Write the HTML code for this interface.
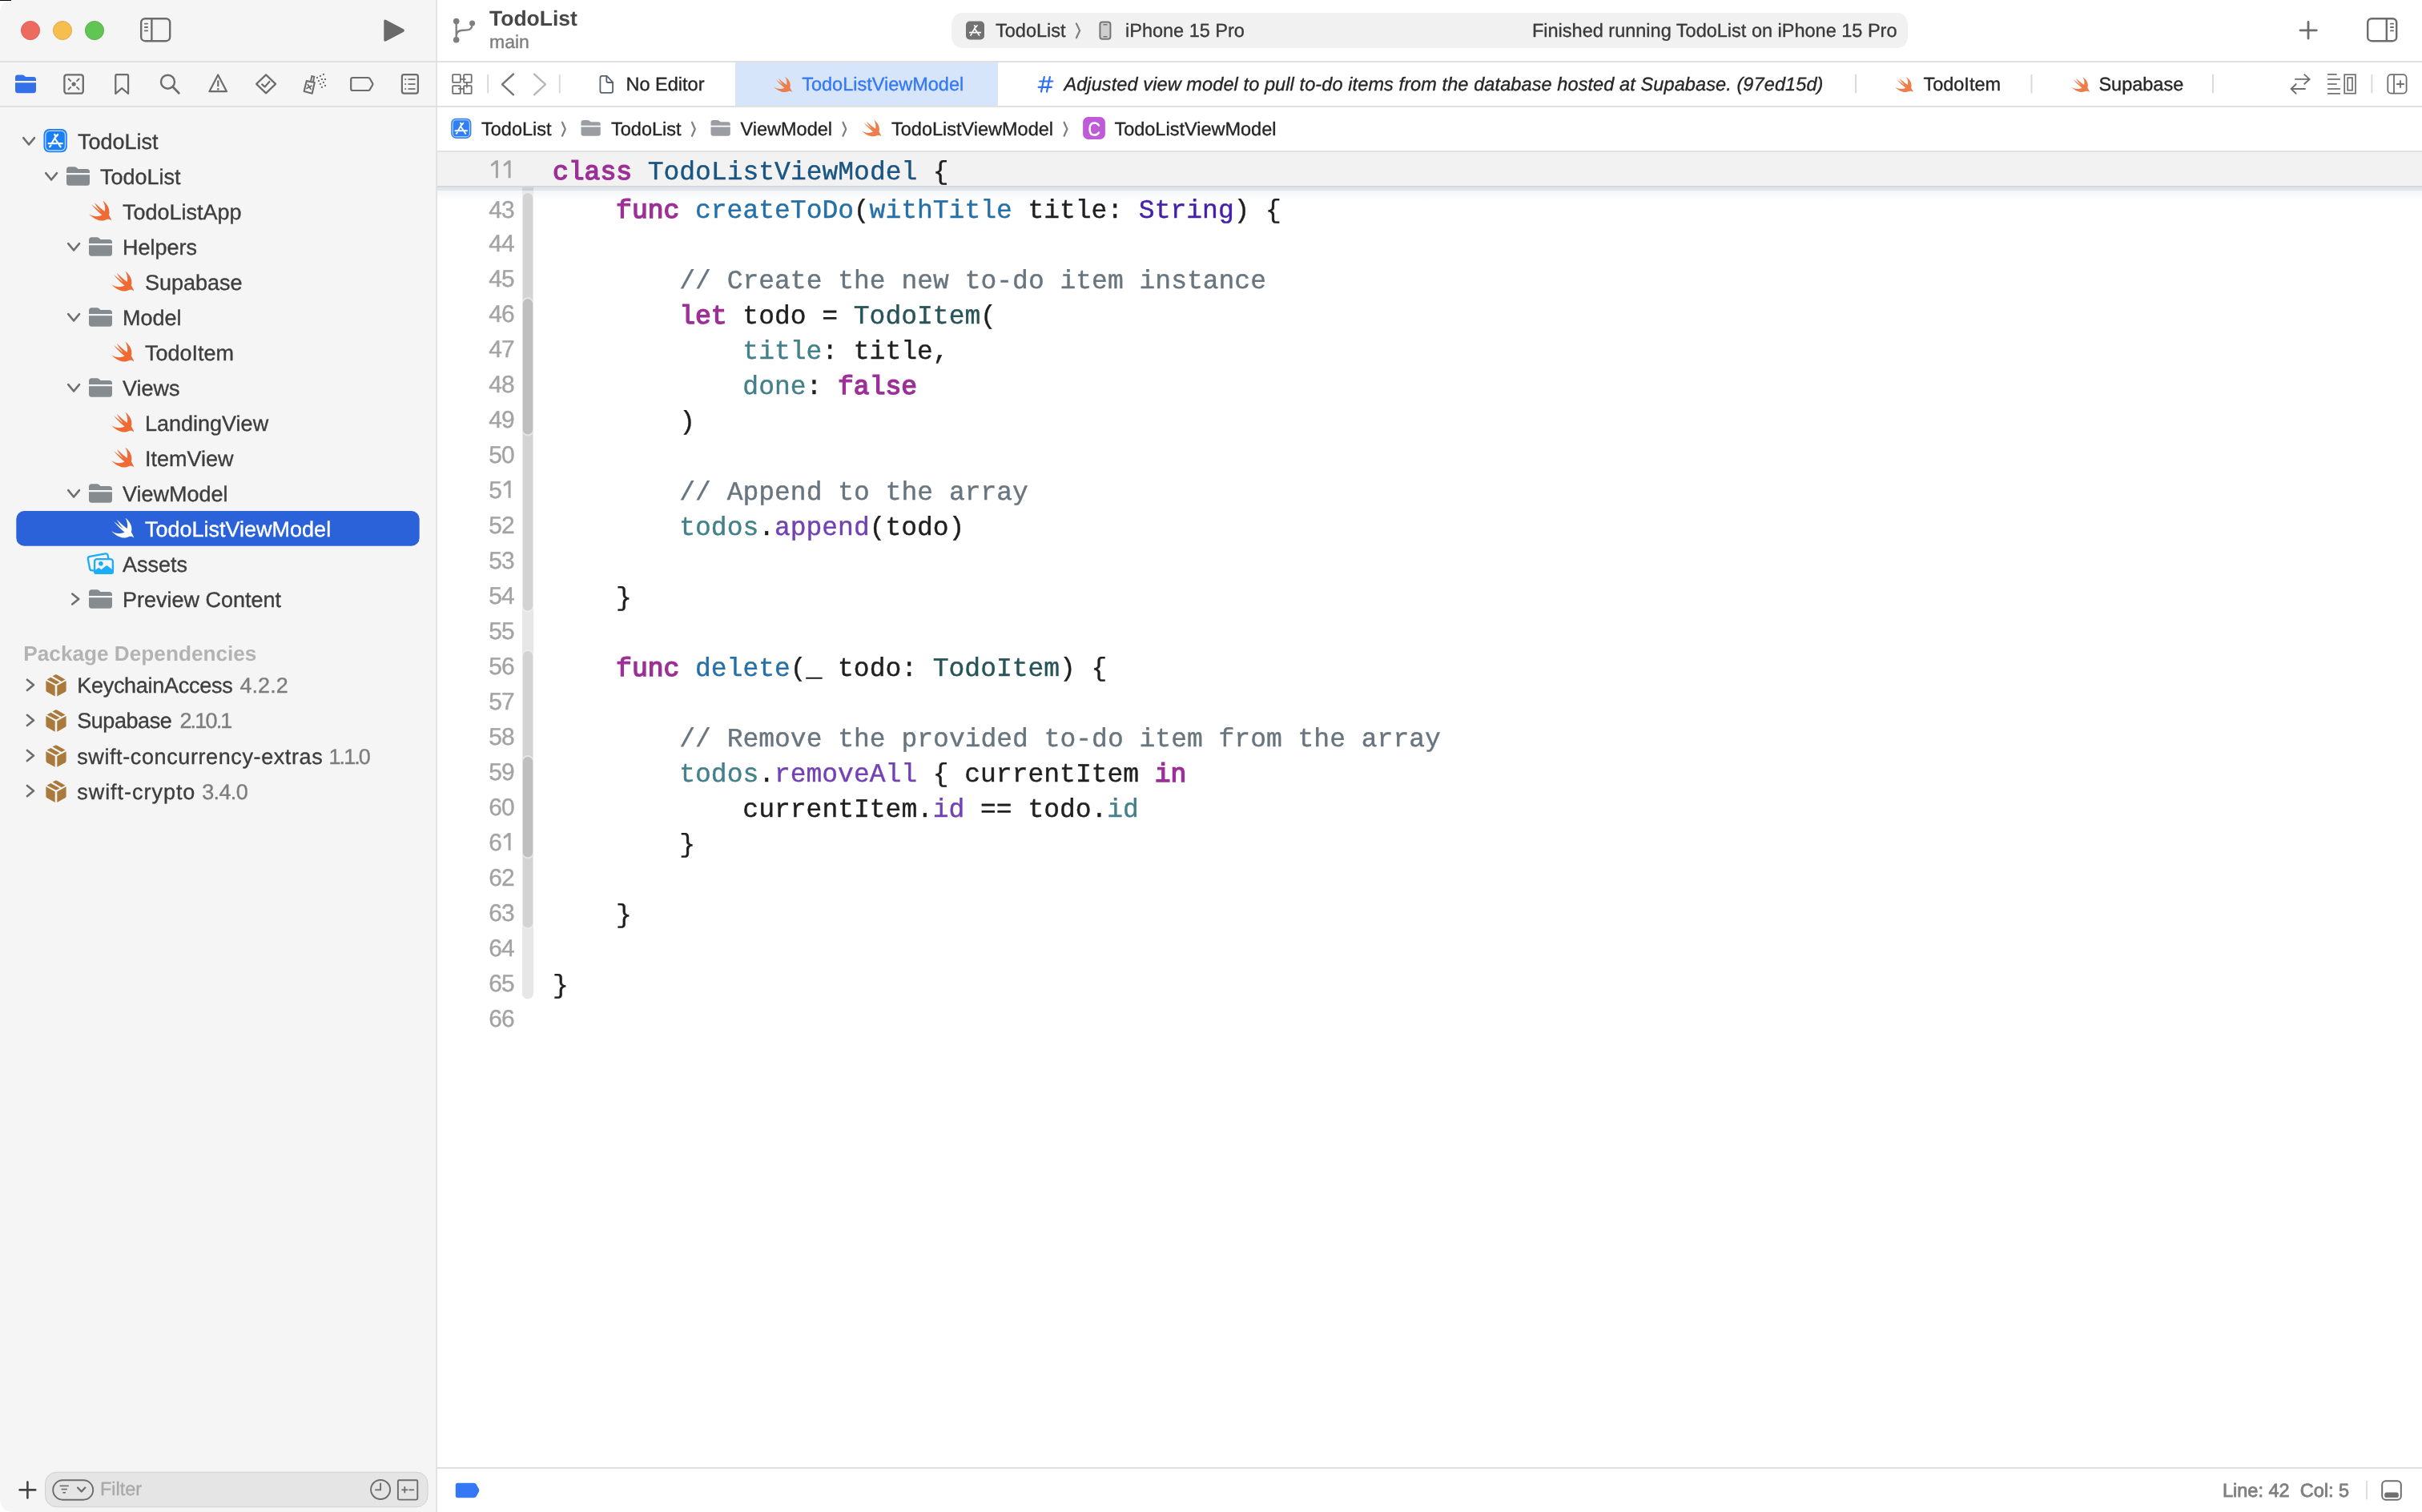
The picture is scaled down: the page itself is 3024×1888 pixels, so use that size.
<!DOCTYPE html><html><head><meta charset="utf-8"><style>html,body{margin:0;padding:0;background:#ffffff;overflow:hidden}svg{display:block;will-change:transform}text{white-space:pre}</style></head><body>
<svg width="3024" height="1888" viewBox="0 0 3024 1888" text-rendering="geometricPrecision">
<rect x="0" y="0" width="3024" height="1888" rx="0" fill="#ffffff" />
<path d="M16 0 L545 0 L545 1888 L17 1888 Q0 1888 0 1871 L0 16 Q0 0 16 0 Z" fill="#f5f5f5"/>
<rect x="0" y="0" width="14" height="1" rx="0" fill="#000000" />
<rect x="544" y="0" width="2" height="1888" rx="0" fill="#e3e3e3" />
<rect x="0" y="76" width="3024" height="2" rx="0" fill="#e0e0e0" />
<rect x="0" y="132" width="3024" height="2" rx="0" fill="#e0e0e0" />
<circle cx="38" cy="38" r="11.6" fill="#ed6a5e" stroke="#d8544a" stroke-width="0.8"/>
<circle cx="78" cy="38" r="11.6" fill="#f5bf4f" stroke="#dba23d" stroke-width="0.8"/>
<circle cx="118" cy="38" r="11.6" fill="#61c554" stroke="#4fa93f" stroke-width="0.8"/>
<rect x="176.2" y="23.2" width="36" height="28" rx="5" fill="none" stroke="#6c6c6c" stroke-width="2.4"/>
<rect x="188.2" y="23.2" width="2.4" height="28" rx="0" fill="#6c6c6c" />
<rect x="180" y="28.700000000000003" width="5" height="1.8" rx="0.9" fill="#6c6c6c" />
<rect x="180" y="33.1" width="5" height="1.8" rx="0.9" fill="#6c6c6c" />
<rect x="180" y="37.5" width="5" height="1.8" rx="0.9" fill="#6c6c6c" />
<path d="M482.2 24.9 Q479.3 23.4 479.3 26.6 L479.3 49.6 Q479.3 52.8 482.2 51.3 L503.6 40.1 Q506.2 38.2 503.6 36.3 Z" fill="#6a6a6a"/>
<g fill="#7f7f7f"><circle cx="569.7" cy="26.6" r="3.8"/><circle cx="569.7" cy="49.8" r="3.8"/><circle cx="589.6" cy="29.1" r="3.5"/></g>
<path d="M569.7 27 L569.7 49.5" fill="none" stroke="#7f7f7f" stroke-width="2.3" stroke-linecap="round" stroke-linejoin="round" />
<path d="M570 43 Q571 38.5 576 38 L584 37.4 Q589.3 37 589.6 30" fill="none" stroke="#7f7f7f" stroke-width="2.3" stroke-linecap="round" stroke-linejoin="round" />
<text x="611" y="32" font-family="'Liberation Sans', sans-serif" font-size="26.5" fill="#474747" font-weight="700" font-style="normal" text-anchor="start" >TodoList</text>
<text x="611" y="60" font-family="'Liberation Sans', sans-serif" font-size="23" fill="#7d7d7d" stroke="#7d7d7d" stroke-width="0.35" font-weight="400" font-style="normal" text-anchor="start" >main</text>
<rect x="1188" y="16" width="1194" height="44" rx="14" fill="#f1f1f1" />
<g transform="translate(1206,26.5) scale(0.7931)"><rect x="0" y="0" width="29" height="29" rx="6" fill="#727272"/><g stroke="#fff" stroke-width="2.1" stroke-linecap="round" stroke-linejoin="round" fill="none"><path d="M15.6 8.2 L9.9 17.9"/><path d="M13.4 6.9 L15.5 9.4 L17.6 6.9"/><path d="M13.9 11.9 L20.9 22.1"/><path d="M6.0 17.9 L16.0 17.9"/><path d="M18.8 17.9 L23.0 17.9"/><path d="M7.5 22.1 L8.9 20.3"/></g></g>
<text x="1243" y="45.5" font-family="'Liberation Sans', sans-serif" font-size="23.5" fill="#3a3a3a" stroke="#3a3a3a" stroke-width="0.35" font-weight="400" font-style="normal" text-anchor="start" >TodoList</text>
<path d="M1343.9 29.4 L1348.1 38.3 L1343.9 47.2" fill="none" stroke="#7f7f7f" stroke-width="2.2" stroke-linecap="round" stroke-linejoin="round" />
<rect x="1373.4" y="27.5" width="13" height="21.2" rx="3" fill="#cfcfcf" stroke="#747474" stroke-width="2"/>
<rect x="1377.5" y="30" width="5" height="1.5" rx="0" fill="#747474" />
<rect x="1377.5" y="45" width="5" height="1.5" rx="0" fill="#747474" />
<text x="1405" y="45.5" font-family="'Liberation Sans', sans-serif" font-size="23.5" fill="#3a3a3a" stroke="#3a3a3a" stroke-width="0.35" font-weight="400" font-style="normal" text-anchor="start" >iPhone 15 Pro</text>
<text x="2368.5" y="46" font-family="'Liberation Sans', sans-serif" font-size="23.5" fill="#3a3a3a" stroke="#3a3a3a" stroke-width="0.35" font-weight="400" font-style="normal" text-anchor="end" >Finished running TodoList on iPhone 15 Pro</text>
<path d="M2882 27.5 L2882 48" fill="none" stroke="#6e6e6e" stroke-width="2.8" stroke-linecap="round" stroke-linejoin="round" />
<path d="M2872 37.8 L2892.3 37.8" fill="none" stroke="#6e6e6e" stroke-width="2.8" stroke-linecap="round" stroke-linejoin="round" />
<rect x="2956.2" y="23.2" width="36" height="28" rx="5" fill="none" stroke="#6c6c6c" stroke-width="2.4"/>
<rect x="2978.6" y="23.2" width="2.4" height="28" rx="0" fill="#6c6c6c" />
<rect x="2984" y="28.8" width="5" height="1.8" rx="0.9" fill="#6c6c6c" />
<rect x="2984" y="33.1" width="5" height="1.8" rx="0.9" fill="#6c6c6c" />
<rect x="2984" y="37.5" width="5" height="1.8" rx="0.9" fill="#6c6c6c" />
<g transform="translate(19,93.6) scale(0.8966,0.9617)"><path fill="#3470e8" d="M0 3.5 Q0 0 3.5 0 L9.5 0 Q11.5 0 13 1.3 L14.5 2.6 L25.5 2.6 Q29 2.6 29 6.2 L29 7.8 L0 7.8 Z"/><path fill="#3470e8" d="M0 10 L29 10 L29 20 Q29 23.5 25.5 23.5 L3.5 23.5 Q0 23.5 0 20 Z"/></g>
<rect x="80.4" y="93.3" width="23.4" height="23.4" rx="3" fill="none" stroke="#6c6c6c" stroke-width="2.3"/>
<circle cx="92.1" cy="105" r="2.6" fill="#6c6c6c"/>
<path d="M85.6 98.5 L88.2 101.1" fill="none" stroke="#6c6c6c" stroke-width="1.8" stroke-linecap="round" stroke-linejoin="round" />
<path d="M98.6 98.5 L96.0 101.1" fill="none" stroke="#6c6c6c" stroke-width="1.8" stroke-linecap="round" stroke-linejoin="round" />
<path d="M85.6 111.5 L88.2 108.9" fill="none" stroke="#6c6c6c" stroke-width="1.8" stroke-linecap="round" stroke-linejoin="round" />
<path d="M98.6 111.5 L96.0 108.9" fill="none" stroke="#6c6c6c" stroke-width="1.8" stroke-linecap="round" stroke-linejoin="round" />
<path d="M144.3 94.5 Q144.3 93.2 145.6 93.2 L158.8 93.2 Q160.1 93.2 160.1 94.5 L160.1 117 L152.2 110.2 L144.3 117 Z" fill="none" stroke="#6c6c6c" stroke-width="2.2" stroke-linecap="round" stroke-linejoin="round" />
<circle cx="209.5" cy="102.2" r="8.5" fill="none" stroke="#6c6c6c" stroke-width="2.4"/>
<path d="M215.8 108.6 L223.3 116.2" fill="none" stroke="#6c6c6c" stroke-width="2.8" stroke-linecap="round" stroke-linejoin="round" />
<path d="M272.2 93.5 L283 114.2 L261.4 114.2 Z" fill="none" stroke="#6c6c6c" stroke-width="2.2" stroke-linecap="round" stroke-linejoin="round" />
<rect x="271.2" y="100.2" width="2.2" height="8" rx="1" fill="#6c6c6c" />
<circle cx="272.3" cy="111.2" r="1.3" fill="#6c6c6c"/>
<path d="M332.1 93.4 L344.1 104.9 L332.1 116.4 L320.1 104.9 Z" fill="none" stroke="#6c6c6c" stroke-width="2.2" stroke-linecap="round" stroke-linejoin="round" />
<path d="M327.2 105.4 L330.6 108.4 L336.4 102" fill="none" stroke="#6c6c6c" stroke-width="2.2" stroke-linecap="round" stroke-linejoin="round" />
<path d="M382.8 101.1 L392.8 103.0 L389.7 116.8 L379.6 113.9 Z" fill="none" stroke="#6c6c6c" stroke-width="2.1" stroke-linecap="round" stroke-linejoin="round" />
<path d="M388.0 101.6 L389.3 95.2 L392.3 95.8 L391.0 102.2" fill="none" stroke="#6c6c6c" stroke-width="1.9" stroke-linecap="butt" stroke-linejoin="miter" />
<path d="M384.3 105.6 L388.0 111.3 M388.9 107.2 L383.0 110.3" fill="none" stroke="#6c6c6c" stroke-width="1.8" stroke-linecap="round" stroke-linejoin="round" />
<rect x="395" y="95.9" width="2" height="2" rx="0" fill="#6c6c6c" />
<rect x="398.9" y="93.9" width="2" height="2" rx="0" fill="#6c6c6c" />
<rect x="402.9" y="91.9" width="2" height="2" rx="0" fill="#6c6c6c" />
<rect x="400.9" y="98" width="2" height="2" rx="0" fill="#6c6c6c" />
<rect x="405" y="98" width="2" height="2" rx="0" fill="#6c6c6c" />
<rect x="396.9" y="100" width="2" height="2" rx="0" fill="#6c6c6c" />
<rect x="402.9" y="101.9" width="2" height="2" rx="0" fill="#6c6c6c" />
<rect x="398.9" y="103.9" width="2" height="2" rx="0" fill="#6c6c6c" />
<rect x="405" y="105.9" width="2" height="2" rx="0" fill="#6c6c6c" />
<rect x="400.9" y="107.9" width="2" height="2" rx="0" fill="#6c6c6c" />
<path d="M440.5 97 L459.6 97 Q461 97 461.8 98.2 L465.2 104 Q465.6 105 465.2 106 L461.8 111.8 Q461 113 459.6 113 L440.5 113 Q438.2 113 438.2 110.7 L438.2 99.3 Q438.2 97 440.5 97 Z" fill="none" stroke="#6c6c6c" stroke-width="2.2" stroke-linecap="round" stroke-linejoin="round" />
<rect x="501.9" y="93.2" width="20" height="23.4" rx="2.5" fill="none" stroke="#6c6c6c" stroke-width="2.2"/>
<rect x="505.3" y="98.2" width="1.8" height="1.7" rx="0" fill="#6c6c6c" />
<rect x="509.5" y="98.2" width="9" height="1.7" rx="0" fill="#6c6c6c" />
<rect x="505.3" y="104.2" width="1.8" height="1.7" rx="0" fill="#6c6c6c" />
<rect x="509.5" y="104.2" width="9" height="1.7" rx="0" fill="#6c6c6c" />
<rect x="505.3" y="110.2" width="1.8" height="1.7" rx="0" fill="#6c6c6c" />
<rect x="509.5" y="110.2" width="9" height="1.7" rx="0" fill="#6c6c6c" />
<g fill="none" stroke="#717171" stroke-width="1.8" stroke-linejoin="round"><rect x="565.2" y="93.2" width="9.6" height="9.6" rx="0.6"/><rect x="579.1" y="93.2" width="9.6" height="9.6" rx="0.6"/><rect x="565.2" y="107.2" width="9.6" height="9.6" rx="0.6"/><rect x="579.1" y="107.2" width="9.6" height="9.6" rx="0.6"/><path d="M575 98.9 L581.6 98.9 M582.9 103 L582.9 109.6 M572.2 110.9 L578.9 110.9"/></g>
<rect x="608.2" y="93" width="2" height="23.400000000000006" rx="0" fill="#dadada" />
<path d="M641 92.5 L627 105.4 L641 118.3" fill="none" stroke="#767676" stroke-width="2.4" stroke-linecap="round" stroke-linejoin="round" />
<path d="M667 92.5 L681 105.4 L667 118.3" fill="none" stroke="#b8b8b8" stroke-width="2.4" stroke-linecap="round" stroke-linejoin="round" />
<rect x="697.8" y="93" width="2" height="23.400000000000006" rx="0" fill="#dadada" />
<path d="M751.9 94.9 L757.6 94.9 L765.1 102.6 L765.1 113.4 Q765.1 115.9 762.6 115.9 L751.9 115.9 Q749.4 115.9 749.4 113.4 L749.4 97.4 Q749.4 94.9 751.9 94.9 Z" fill="none" stroke="#56636f" stroke-width="1.8" stroke-linecap="round" stroke-linejoin="round" />
<path d="M757.3 95.3 L757.3 101 Q757.3 103 759.3 103 L765 103" fill="none" stroke="#56636f" stroke-width="1.8" stroke-linecap="round" stroke-linejoin="round" />
<text x="781.5" y="113" font-family="'Liberation Sans', sans-serif" font-size="23.5" fill="#262626" stroke="#262626" stroke-width="0.35" font-weight="400" font-style="normal" text-anchor="start" >No Editor</text>
<rect x="918" y="78" width="328" height="54" rx="0" fill="#d6e5f9" />
<g transform="translate(965.6,95.5) scale(0.8429,0.8040)"><path fill="#ee7d4c" d="M17.3 0.4 C22.8 4.2 26.6 10.8 24.6 17.6 C25.8 19.6 27.1 21.9 27.9 24.4 C26.3 23.0 24.3 22.4 22.1 22.9 C17.6 25.2 10.6 25.9 0.4 16.3 C5.8 19.6 11.6 20.0 16.4 17.6 C11.4 13.4 6.4 8.4 3.4 4.4 C8.0 8.0 12.2 11.4 14.9 13.4 C11.9 10.2 9.2 6.6 7.0 2.6 C11.0 6.2 15.4 10.2 19.6 13.1 C20.6 9.0 19.8 4.2 17.3 0.4 Z"/></g>
<text x="1001.2" y="113.1" font-family="'Liberation Sans', sans-serif" font-size="23.5" fill="#3478f6" stroke="#3478f6" stroke-width="0.35" font-weight="400" font-style="normal" text-anchor="start" >TodoListViewModel</text>
<path d="M1303.9 96 L1300 114.6 M1310.9 96 L1307 114.6 M1298.2 101.5 L1314.3 101.5 M1296.6 108.8 L1312.9 108.8" fill="none" stroke="#2e72f2" stroke-width="2.2" stroke-linecap="round" stroke-linejoin="round" />
<text x="1328.4" y="113.1" font-family="'Liberation Sans', sans-serif" font-size="23.5" fill="#262626" stroke="#262626" stroke-width="0.35" font-weight="400" font-style="italic" text-anchor="start" textLength="948" lengthAdjust="spacing">Adjusted view model to pull to-do items from the database hosted at Supabase. (97ed15d)</text>
<rect x="2316.0" y="93" width="2" height="23.400000000000006" rx="0" fill="#dadada" />
<g transform="translate(2365.4,95.8) scale(0.8429,0.7880)"><path fill="#ee7d4c" d="M17.3 0.4 C22.8 4.2 26.6 10.8 24.6 17.6 C25.8 19.6 27.1 21.9 27.9 24.4 C26.3 23.0 24.3 22.4 22.1 22.9 C17.6 25.2 10.6 25.9 0.4 16.3 C5.8 19.6 11.6 20.0 16.4 17.6 C11.4 13.4 6.4 8.4 3.4 4.4 C8.0 8.0 12.2 11.4 14.9 13.4 C11.9 10.2 9.2 6.6 7.0 2.6 C11.0 6.2 15.4 10.2 19.6 13.1 C20.6 9.0 19.8 4.2 17.3 0.4 Z"/></g>
<text x="2401.4" y="113.3" font-family="'Liberation Sans', sans-serif" font-size="23.5" fill="#262626" stroke="#262626" stroke-width="0.35" font-weight="400" font-style="normal" text-anchor="start" >TodoItem</text>
<rect x="2535.5" y="93" width="2" height="23.400000000000006" rx="0" fill="#dadada" />
<g transform="translate(2585.7,95.8) scale(0.8429,0.7880)"><path fill="#ee7d4c" d="M17.3 0.4 C22.8 4.2 26.6 10.8 24.6 17.6 C25.8 19.6 27.1 21.9 27.9 24.4 C26.3 23.0 24.3 22.4 22.1 22.9 C17.6 25.2 10.6 25.9 0.4 16.3 C5.8 19.6 11.6 20.0 16.4 17.6 C11.4 13.4 6.4 8.4 3.4 4.4 C8.0 8.0 12.2 11.4 14.9 13.4 C11.9 10.2 9.2 6.6 7.0 2.6 C11.0 6.2 15.4 10.2 19.6 13.1 C20.6 9.0 19.8 4.2 17.3 0.4 Z"/></g>
<text x="2620.4" y="113.3" font-family="'Liberation Sans', sans-serif" font-size="23.5" fill="#262626" stroke="#262626" stroke-width="0.35" font-weight="400" font-style="normal" text-anchor="start" >Supabase</text>
<rect x="2762.0" y="93" width="2" height="23.400000000000006" rx="0" fill="#dadada" />
<path d="M2865.2 98.9 L2883.6 98.9 M2876.7 92.6 L2883.6 98.9 L2876.7 105.2" fill="none" stroke="#6e6e6e" stroke-width="1.9" stroke-linecap="butt" stroke-linejoin="miter" />
<path d="M2878.7 111 L2860.6 111 M2867.2 104.5 L2860.6 111 L2867.2 117.4" fill="none" stroke="#6e6e6e" stroke-width="1.9" stroke-linecap="butt" stroke-linejoin="miter" />
<rect x="2906.1" y="92.05000000000001" width="11.599999999999909" height="1.7" rx="0" fill="#6e6e6e" />
<rect x="2906.1" y="98.05000000000001" width="15.800000000000182" height="1.7" rx="0" fill="#6e6e6e" />
<rect x="2906.1" y="104.15" width="11.599999999999909" height="1.7" rx="0" fill="#6e6e6e" />
<rect x="2906.1" y="110.15" width="15.800000000000182" height="1.7" rx="0" fill="#6e6e6e" />
<rect x="2906.1" y="116.05000000000001" width="15.800000000000182" height="1.7" rx="0" fill="#6e6e6e" />
<rect x="2927.2" y="93.2" width="13.8" height="23.5" fill="none" stroke="#6e6e6e" stroke-width="1.7"/>
<rect x="2931.2" y="97.1" width="5.8" height="15.6" fill="none" stroke="#6e6e6e" stroke-width="1.7"/>
<rect x="2960.4" y="93" width="2" height="23.400000000000006" rx="0" fill="#dadada" />
<rect x="2981.3" y="93.2" width="23.3" height="23.5" rx="4.2" fill="none" stroke="#6e6e6e" stroke-width="1.8"/>
<rect x="2988.1" y="93.2" width="1.8" height="23.5" rx="0" fill="#6e6e6e" />
<path d="M2997 100.2 L2997 109.8 M2992.2 105 L3001.8 105" fill="none" stroke="#6e6e6e" stroke-width="1.8" stroke-linecap="butt" stroke-linejoin="round" />
<g transform="translate(563.2,147.7) scale(0.8690)"><rect x="0" y="0" width="29" height="29" rx="7" fill="#2f7ff3"/><rect x="2.3" y="2.3" width="24.4" height="24.4" rx="5.2" fill="none" stroke="#bcd8fb" stroke-width="1.3"/><g stroke="#fff" stroke-width="2.1" stroke-linecap="round" stroke-linejoin="round" fill="none"><path d="M15.6 8.2 L9.9 17.9"/><path d="M13.4 6.9 L15.5 9.4 L17.6 6.9"/><path d="M13.9 11.9 L20.9 22.1"/><path d="M6.0 17.9 L16.0 17.9"/><path d="M18.8 17.9 L23.0 17.9"/><path d="M7.5 22.1 L8.9 20.3"/></g></g>
<text x="601" y="169" font-family="'Liberation Sans', sans-serif" font-size="23.5" fill="#262626" stroke="#262626" stroke-width="0.35" font-weight="400" font-style="normal" text-anchor="start" >TodoList</text>
<path d="M702.0 152.7 L705.8 161.2 L702.0 169.8" fill="none" stroke="#7f7f7f" stroke-width="2.2" stroke-linecap="round" stroke-linejoin="round" />
<g transform="translate(725.5,150.1) scale(0.8379,0.8383)"><path fill="#9a9ea2" d="M0 3.5 Q0 0 3.5 0 L9.5 0 Q11.5 0 13 1.3 L14.5 2.6 L25.5 2.6 Q29 2.6 29 6.2 L29 7.8 L0 7.8 Z"/><path fill="#9a9ea2" d="M0 10 L29 10 L29 20 Q29 23.5 25.5 23.5 L3.5 23.5 Q0 23.5 0 20 Z"/></g>
<text x="763" y="169" font-family="'Liberation Sans', sans-serif" font-size="23.5" fill="#262626" stroke="#262626" stroke-width="0.35" font-weight="400" font-style="normal" text-anchor="start" >TodoList</text>
<path d="M864.0 152.7 L867.8 161.2 L864.0 169.8" fill="none" stroke="#7f7f7f" stroke-width="2.2" stroke-linecap="round" stroke-linejoin="round" />
<g transform="translate(887.5,150.1) scale(0.8379,0.8383)"><path fill="#9a9ea2" d="M0 3.5 Q0 0 3.5 0 L9.5 0 Q11.5 0 13 1.3 L14.5 2.6 L25.5 2.6 Q29 2.6 29 6.2 L29 7.8 L0 7.8 Z"/><path fill="#9a9ea2" d="M0 10 L29 10 L29 20 Q29 23.5 25.5 23.5 L3.5 23.5 Q0 23.5 0 20 Z"/></g>
<text x="924.5" y="169" font-family="'Liberation Sans', sans-serif" font-size="23.5" fill="#262626" stroke="#262626" stroke-width="0.35" font-weight="400" font-style="normal" text-anchor="start" >ViewModel</text>
<path d="M1052.5 152.7 L1056.3 161.2 L1052.5 169.8" fill="none" stroke="#7f7f7f" stroke-width="2.2" stroke-linecap="round" stroke-linejoin="round" />
<g transform="translate(1075.4,149.5) scale(0.9000,0.8560)"><path fill="#ee7d4c" d="M17.3 0.4 C22.8 4.2 26.6 10.8 24.6 17.6 C25.8 19.6 27.1 21.9 27.9 24.4 C26.3 23.0 24.3 22.4 22.1 22.9 C17.6 25.2 10.6 25.9 0.4 16.3 C5.8 19.6 11.6 20.0 16.4 17.6 C11.4 13.4 6.4 8.4 3.4 4.4 C8.0 8.0 12.2 11.4 14.9 13.4 C11.9 10.2 9.2 6.6 7.0 2.6 C11.0 6.2 15.4 10.2 19.6 13.1 C20.6 9.0 19.8 4.2 17.3 0.4 Z"/></g>
<text x="1113" y="169" font-family="'Liberation Sans', sans-serif" font-size="23.5" fill="#262626" stroke="#262626" stroke-width="0.35" font-weight="400" font-style="normal" text-anchor="start" >TodoListViewModel</text>
<path d="M1328.6 152.7 L1332.4 161.2 L1328.6 169.8" fill="none" stroke="#7f7f7f" stroke-width="2.2" stroke-linecap="round" stroke-linejoin="round" />
<rect x="1352.1" y="146" width="27.8" height="27.9" rx="6.5" fill="#bf5bd6" />
<path d="M1371.9 156.6 Q1370.2 153.6 1366.2 153.6 Q1360.6 153.6 1360.6 161.2 Q1360.6 168.6 1366.2 168.6 Q1370.2 168.6 1371.9 165.6" fill="none" stroke="#ffffff" stroke-width="2.5" stroke-linecap="round" stroke-linejoin="round" />
<text x="1391.4" y="169" font-family="'Liberation Sans', sans-serif" font-size="23.5" fill="#262626" stroke="#262626" stroke-width="0.35" font-weight="400" font-style="normal" text-anchor="start" >TodoListViewModel</text>
<rect x="546" y="188" width="2478" height="44" rx="0" fill="#f2f2f2" />
<rect x="546" y="188" width="2478" height="2" rx="0" fill="#e2e2e2" />
<defs><linearGradient id="sh" x1="0" y1="0" x2="0" y2="1"><stop offset="0" stop-color="#f4f5f7"/><stop offset="1" stop-color="#ffffff"/></linearGradient></defs>
<rect x="546" y="238" width="2478" height="12" rx="0" fill="url(#sh)" />
<rect x="546" y="234" width="2478" height="4" rx="0" fill="#dfe6ef" />
<rect x="546" y="232" width="2478" height="2" rx="0" fill="#d7d7d7" />
<defs><clipPath id="rib"><rect x="652" y="234" width="14" height="1020"/></clipPath></defs>
<path d="M652 234 L666 234 L666 1240.5 A7.0 7.0 0 0 1 652 1240.5 Z" fill="#e7e7e7" clip-path="url(#rib)"/>
<path d="M652 247.0 A7.0 7.0 0 0 1 666 247.0 L666 756.5 A7.0 7.0 0 0 1 652 756.5 Z" fill="#d3d3d3" stroke="#ececec" stroke-width="1.8" clip-path="url(#rib)"/>
<path d="M652 819.0 A7.0 7.0 0 0 1 666 819.0 L666 1152.5 A7.0 7.0 0 0 1 652 1152.5 Z" fill="#d3d3d3" stroke="#ececec" stroke-width="1.8" clip-path="url(#rib)"/>
<path d="M652 379.2 A7.0 7.0 0 0 1 666 379.2 L666 536.5 A7.0 7.0 0 0 1 652 536.5 Z" fill="#bfbfbf" stroke="#e6e6e6" stroke-width="1.8" clip-path="url(#rib)"/>
<path d="M652 951.0 A7.0 7.0 0 0 1 666 951.0 L666 1064.5 A7.0 7.0 0 0 1 652 1064.5 Z" fill="#bfbfbf" stroke="#e6e6e6" stroke-width="1.8" clip-path="url(#rib)"/>
<rect x="652" y="234" width="14" height="4" rx="0" fill="#c9cfd8" />
<text x="642.6" y="271.6" font-family="'Liberation Sans', sans-serif" font-size="30" fill="#a3a3a3" stroke="#a3a3a3" stroke-width="0.35" font-weight="400" font-style="normal" text-anchor="end" >3</text>
<text x="626.9" y="271.6" font-family="'Liberation Sans', sans-serif" font-size="30" fill="#a3a3a3" stroke="#a3a3a3" stroke-width="0.35" font-weight="400" font-style="normal" text-anchor="end" >4</text>
<text x="769.12" y="272" font-family="'Liberation Mono', monospace" font-size="33" fill="#9c3096" stroke="#9c3096" stroke-width="1.4" font-weight="400">func</text><text x="868.02" y="272" font-family="'Liberation Mono', monospace" font-size="33" fill="#2670a8" stroke="#2670a8" stroke-width="0.4" font-weight="400">createToDo</text><text x="1065.82" y="272" font-family="'Liberation Mono', monospace" font-size="33" fill="#1f1f1f" stroke="#1f1f1f" stroke-width="0.4" font-weight="400">(</text><text x="1085.60" y="272" font-family="'Liberation Mono', monospace" font-size="33" fill="#2670a8" stroke="#2670a8" stroke-width="0.4" font-weight="400">withTitle</text><text x="1283.40" y="272" font-family="'Liberation Mono', monospace" font-size="33" fill="#1f1f1f" stroke="#1f1f1f" stroke-width="0.4" font-weight="400">title</text><text x="1382.30" y="272" font-family="'Liberation Mono', monospace" font-size="33" fill="#1f1f1f" stroke="#1f1f1f" stroke-width="0.4" font-weight="400">:</text><text x="1421.86" y="272" font-family="'Liberation Mono', monospace" font-size="33" fill="#4420aa" stroke="#4420aa" stroke-width="0.4" font-weight="400">String</text><text x="1540.54" y="272" font-family="'Liberation Mono', monospace" font-size="33" fill="#1f1f1f" stroke="#1f1f1f" stroke-width="0.4" font-weight="400">)</text><text x="1580.10" y="272" font-family="'Liberation Mono', monospace" font-size="33" fill="#1f1f1f" stroke="#1f1f1f" stroke-width="0.4" font-weight="400">{</text>
<text x="642.6" y="313.8" font-family="'Liberation Sans', sans-serif" font-size="30" fill="#a3a3a3" stroke="#a3a3a3" stroke-width="0.35" font-weight="400" font-style="normal" text-anchor="end" >4</text>
<text x="626.9" y="313.8" font-family="'Liberation Sans', sans-serif" font-size="30" fill="#a3a3a3" stroke="#a3a3a3" stroke-width="0.35" font-weight="400" font-style="normal" text-anchor="end" >4</text>

<text x="642.6" y="357.8" font-family="'Liberation Sans', sans-serif" font-size="30" fill="#a3a3a3" stroke="#a3a3a3" stroke-width="0.35" font-weight="400" font-style="normal" text-anchor="end" >5</text>
<text x="626.9" y="357.8" font-family="'Liberation Sans', sans-serif" font-size="30" fill="#a3a3a3" stroke="#a3a3a3" stroke-width="0.35" font-weight="400" font-style="normal" text-anchor="end" >4</text>
<text x="848.24" y="360" font-family="'Liberation Mono', monospace" font-size="33" fill="#68757f" stroke="#68757f" stroke-width="0.4" font-weight="400">// Create the new to-do item instance</text>
<text x="642.6" y="401.8" font-family="'Liberation Sans', sans-serif" font-size="30" fill="#a3a3a3" stroke="#a3a3a3" stroke-width="0.35" font-weight="400" font-style="normal" text-anchor="end" >6</text>
<text x="626.9" y="401.8" font-family="'Liberation Sans', sans-serif" font-size="30" fill="#a3a3a3" stroke="#a3a3a3" stroke-width="0.35" font-weight="400" font-style="normal" text-anchor="end" >4</text>
<text x="848.24" y="404" font-family="'Liberation Mono', monospace" font-size="33" fill="#9c3096" stroke="#9c3096" stroke-width="1.4" font-weight="400">let</text><text x="927.36" y="404" font-family="'Liberation Mono', monospace" font-size="33" fill="#1f1f1f" stroke="#1f1f1f" stroke-width="0.4" font-weight="400">todo</text><text x="1026.26" y="404" font-family="'Liberation Mono', monospace" font-size="33" fill="#1f1f1f" stroke="#1f1f1f" stroke-width="0.4" font-weight="400">=</text><text x="1065.82" y="404" font-family="'Liberation Mono', monospace" font-size="33" fill="#275459" stroke="#275459" stroke-width="0.4" font-weight="400">TodoItem</text><text x="1224.06" y="404" font-family="'Liberation Mono', monospace" font-size="33" fill="#1f1f1f" stroke="#1f1f1f" stroke-width="0.4" font-weight="400">(</text>
<text x="642.6" y="445.8" font-family="'Liberation Sans', sans-serif" font-size="30" fill="#a3a3a3" stroke="#a3a3a3" stroke-width="0.35" font-weight="400" font-style="normal" text-anchor="end" >7</text>
<text x="626.9" y="445.8" font-family="'Liberation Sans', sans-serif" font-size="30" fill="#a3a3a3" stroke="#a3a3a3" stroke-width="0.35" font-weight="400" font-style="normal" text-anchor="end" >4</text>
<text x="927.36" y="448" font-family="'Liberation Mono', monospace" font-size="33" fill="#43808a" stroke="#43808a" stroke-width="0.4" font-weight="400">title</text><text x="1026.26" y="448" font-family="'Liberation Mono', monospace" font-size="33" fill="#1f1f1f" stroke="#1f1f1f" stroke-width="0.4" font-weight="400">:</text><text x="1065.82" y="448" font-family="'Liberation Mono', monospace" font-size="33" fill="#1f1f1f" stroke="#1f1f1f" stroke-width="0.4" font-weight="400">title,</text>
<text x="642.6" y="489.8" font-family="'Liberation Sans', sans-serif" font-size="30" fill="#a3a3a3" stroke="#a3a3a3" stroke-width="0.35" font-weight="400" font-style="normal" text-anchor="end" >8</text>
<text x="626.9" y="489.8" font-family="'Liberation Sans', sans-serif" font-size="30" fill="#a3a3a3" stroke="#a3a3a3" stroke-width="0.35" font-weight="400" font-style="normal" text-anchor="end" >4</text>
<text x="927.36" y="492" font-family="'Liberation Mono', monospace" font-size="33" fill="#43808a" stroke="#43808a" stroke-width="0.4" font-weight="400">done</text><text x="1006.48" y="492" font-family="'Liberation Mono', monospace" font-size="33" fill="#1f1f1f" stroke="#1f1f1f" stroke-width="0.4" font-weight="400">:</text><text x="1046.04" y="492" font-family="'Liberation Mono', monospace" font-size="33" fill="#9c3096" stroke="#9c3096" stroke-width="1.4" font-weight="400">false</text>
<text x="642.6" y="533.8" font-family="'Liberation Sans', sans-serif" font-size="30" fill="#a3a3a3" stroke="#a3a3a3" stroke-width="0.35" font-weight="400" font-style="normal" text-anchor="end" >9</text>
<text x="626.9" y="533.8" font-family="'Liberation Sans', sans-serif" font-size="30" fill="#a3a3a3" stroke="#a3a3a3" stroke-width="0.35" font-weight="400" font-style="normal" text-anchor="end" >4</text>
<text x="848.24" y="536" font-family="'Liberation Mono', monospace" font-size="33" fill="#1f1f1f" stroke="#1f1f1f" stroke-width="0.4" font-weight="400">)</text>
<text x="642.6" y="577.8" font-family="'Liberation Sans', sans-serif" font-size="30" fill="#a3a3a3" stroke="#a3a3a3" stroke-width="0.35" font-weight="400" font-style="normal" text-anchor="end" >0</text>
<text x="626.9" y="577.8" font-family="'Liberation Sans', sans-serif" font-size="30" fill="#a3a3a3" stroke="#a3a3a3" stroke-width="0.35" font-weight="400" font-style="normal" text-anchor="end" >5</text>

<path d="M634.60 599.90 L637.60 599.90 L637.60 621.80 L634.60 621.80 L634.60 603.90 L629.40 607.60 L628.40 605.00 Z" fill="#a3a3a3"/>
<text x="626.9" y="621.8" font-family="'Liberation Sans', sans-serif" font-size="30" fill="#a3a3a3" stroke="#a3a3a3" stroke-width="0.35" font-weight="400" font-style="normal" text-anchor="end" >5</text>
<text x="848.24" y="624" font-family="'Liberation Mono', monospace" font-size="33" fill="#68757f" stroke="#68757f" stroke-width="0.4" font-weight="400">// Append to the array</text>
<text x="642.6" y="665.8" font-family="'Liberation Sans', sans-serif" font-size="30" fill="#a3a3a3" stroke="#a3a3a3" stroke-width="0.35" font-weight="400" font-style="normal" text-anchor="end" >2</text>
<text x="626.9" y="665.8" font-family="'Liberation Sans', sans-serif" font-size="30" fill="#a3a3a3" stroke="#a3a3a3" stroke-width="0.35" font-weight="400" font-style="normal" text-anchor="end" >5</text>
<text x="848.24" y="668" font-family="'Liberation Mono', monospace" font-size="33" fill="#43808a" stroke="#43808a" stroke-width="0.4" font-weight="400">todos</text><text x="947.14" y="668" font-family="'Liberation Mono', monospace" font-size="33" fill="#1f1f1f" stroke="#1f1f1f" stroke-width="0.4" font-weight="400">.</text><text x="966.92" y="668" font-family="'Liberation Mono', monospace" font-size="33" fill="#7241b3" stroke="#7241b3" stroke-width="0.4" font-weight="400">append</text><text x="1085.60" y="668" font-family="'Liberation Mono', monospace" font-size="33" fill="#1f1f1f" stroke="#1f1f1f" stroke-width="0.4" font-weight="400">(todo)</text>
<text x="642.6" y="709.8" font-family="'Liberation Sans', sans-serif" font-size="30" fill="#a3a3a3" stroke="#a3a3a3" stroke-width="0.35" font-weight="400" font-style="normal" text-anchor="end" >3</text>
<text x="626.9" y="709.8" font-family="'Liberation Sans', sans-serif" font-size="30" fill="#a3a3a3" stroke="#a3a3a3" stroke-width="0.35" font-weight="400" font-style="normal" text-anchor="end" >5</text>

<text x="642.6" y="753.8" font-family="'Liberation Sans', sans-serif" font-size="30" fill="#a3a3a3" stroke="#a3a3a3" stroke-width="0.35" font-weight="400" font-style="normal" text-anchor="end" >4</text>
<text x="626.9" y="753.8" font-family="'Liberation Sans', sans-serif" font-size="30" fill="#a3a3a3" stroke="#a3a3a3" stroke-width="0.35" font-weight="400" font-style="normal" text-anchor="end" >5</text>
<text x="769.12" y="756" font-family="'Liberation Mono', monospace" font-size="33" fill="#1f1f1f" stroke="#1f1f1f" stroke-width="0.4" font-weight="400">}</text>
<text x="642.6" y="797.8" font-family="'Liberation Sans', sans-serif" font-size="30" fill="#a3a3a3" stroke="#a3a3a3" stroke-width="0.35" font-weight="400" font-style="normal" text-anchor="end" >5</text>
<text x="626.9" y="797.8" font-family="'Liberation Sans', sans-serif" font-size="30" fill="#a3a3a3" stroke="#a3a3a3" stroke-width="0.35" font-weight="400" font-style="normal" text-anchor="end" >5</text>

<text x="642.6" y="841.8" font-family="'Liberation Sans', sans-serif" font-size="30" fill="#a3a3a3" stroke="#a3a3a3" stroke-width="0.35" font-weight="400" font-style="normal" text-anchor="end" >6</text>
<text x="626.9" y="841.8" font-family="'Liberation Sans', sans-serif" font-size="30" fill="#a3a3a3" stroke="#a3a3a3" stroke-width="0.35" font-weight="400" font-style="normal" text-anchor="end" >5</text>
<text x="769.12" y="844" font-family="'Liberation Mono', monospace" font-size="33" fill="#9c3096" stroke="#9c3096" stroke-width="1.4" font-weight="400">func</text><text x="868.02" y="844" font-family="'Liberation Mono', monospace" font-size="33" fill="#2670a8" stroke="#2670a8" stroke-width="0.4" font-weight="400">delete</text><text x="986.70" y="844" font-family="'Liberation Mono', monospace" font-size="33" fill="#1f1f1f" stroke="#1f1f1f" stroke-width="0.4" font-weight="400">(_</text><text x="1046.04" y="844" font-family="'Liberation Mono', monospace" font-size="33" fill="#1f1f1f" stroke="#1f1f1f" stroke-width="0.4" font-weight="400">todo</text><text x="1125.16" y="844" font-family="'Liberation Mono', monospace" font-size="33" fill="#1f1f1f" stroke="#1f1f1f" stroke-width="0.4" font-weight="400">:</text><text x="1164.72" y="844" font-family="'Liberation Mono', monospace" font-size="33" fill="#275459" stroke="#275459" stroke-width="0.4" font-weight="400">TodoItem</text><text x="1322.96" y="844" font-family="'Liberation Mono', monospace" font-size="33" fill="#1f1f1f" stroke="#1f1f1f" stroke-width="0.4" font-weight="400">)</text><text x="1362.52" y="844" font-family="'Liberation Mono', monospace" font-size="33" fill="#1f1f1f" stroke="#1f1f1f" stroke-width="0.4" font-weight="400">{</text>
<text x="642.6" y="885.8" font-family="'Liberation Sans', sans-serif" font-size="30" fill="#a3a3a3" stroke="#a3a3a3" stroke-width="0.35" font-weight="400" font-style="normal" text-anchor="end" >7</text>
<text x="626.9" y="885.8" font-family="'Liberation Sans', sans-serif" font-size="30" fill="#a3a3a3" stroke="#a3a3a3" stroke-width="0.35" font-weight="400" font-style="normal" text-anchor="end" >5</text>

<text x="642.6" y="929.8" font-family="'Liberation Sans', sans-serif" font-size="30" fill="#a3a3a3" stroke="#a3a3a3" stroke-width="0.35" font-weight="400" font-style="normal" text-anchor="end" >8</text>
<text x="626.9" y="929.8" font-family="'Liberation Sans', sans-serif" font-size="30" fill="#a3a3a3" stroke="#a3a3a3" stroke-width="0.35" font-weight="400" font-style="normal" text-anchor="end" >5</text>
<text x="848.24" y="932" font-family="'Liberation Mono', monospace" font-size="33" fill="#68757f" stroke="#68757f" stroke-width="0.4" font-weight="400">// Remove the provided to-do item from the array</text>
<text x="642.6" y="973.8" font-family="'Liberation Sans', sans-serif" font-size="30" fill="#a3a3a3" stroke="#a3a3a3" stroke-width="0.35" font-weight="400" font-style="normal" text-anchor="end" >9</text>
<text x="626.9" y="973.8" font-family="'Liberation Sans', sans-serif" font-size="30" fill="#a3a3a3" stroke="#a3a3a3" stroke-width="0.35" font-weight="400" font-style="normal" text-anchor="end" >5</text>
<text x="848.24" y="976" font-family="'Liberation Mono', monospace" font-size="33" fill="#43808a" stroke="#43808a" stroke-width="0.4" font-weight="400">todos</text><text x="947.14" y="976" font-family="'Liberation Mono', monospace" font-size="33" fill="#1f1f1f" stroke="#1f1f1f" stroke-width="0.4" font-weight="400">.</text><text x="966.92" y="976" font-family="'Liberation Mono', monospace" font-size="33" fill="#7241b3" stroke="#7241b3" stroke-width="0.4" font-weight="400">removeAll</text><text x="1164.72" y="976" font-family="'Liberation Mono', monospace" font-size="33" fill="#1f1f1f" stroke="#1f1f1f" stroke-width="0.4" font-weight="400">{</text><text x="1204.28" y="976" font-family="'Liberation Mono', monospace" font-size="33" fill="#1f1f1f" stroke="#1f1f1f" stroke-width="0.4" font-weight="400">currentItem</text><text x="1441.64" y="976" font-family="'Liberation Mono', monospace" font-size="33" fill="#9c3096" stroke="#9c3096" stroke-width="1.4" font-weight="400">in</text>
<text x="642.6" y="1017.8" font-family="'Liberation Sans', sans-serif" font-size="30" fill="#a3a3a3" stroke="#a3a3a3" stroke-width="0.35" font-weight="400" font-style="normal" text-anchor="end" >0</text>
<text x="626.9" y="1017.8" font-family="'Liberation Sans', sans-serif" font-size="30" fill="#a3a3a3" stroke="#a3a3a3" stroke-width="0.35" font-weight="400" font-style="normal" text-anchor="end" >6</text>
<text x="927.36" y="1020" font-family="'Liberation Mono', monospace" font-size="33" fill="#1f1f1f" stroke="#1f1f1f" stroke-width="0.4" font-weight="400">currentItem</text><text x="1144.94" y="1020" font-family="'Liberation Mono', monospace" font-size="33" fill="#1f1f1f" stroke="#1f1f1f" stroke-width="0.4" font-weight="400">.</text><text x="1164.72" y="1020" font-family="'Liberation Mono', monospace" font-size="33" fill="#7241b3" stroke="#7241b3" stroke-width="0.4" font-weight="400">id</text><text x="1224.06" y="1020" font-family="'Liberation Mono', monospace" font-size="33" fill="#1f1f1f" stroke="#1f1f1f" stroke-width="0.4" font-weight="400">==</text><text x="1283.40" y="1020" font-family="'Liberation Mono', monospace" font-size="33" fill="#1f1f1f" stroke="#1f1f1f" stroke-width="0.4" font-weight="400">todo</text><text x="1362.52" y="1020" font-family="'Liberation Mono', monospace" font-size="33" fill="#1f1f1f" stroke="#1f1f1f" stroke-width="0.4" font-weight="400">.</text><text x="1382.30" y="1020" font-family="'Liberation Mono', monospace" font-size="33" fill="#43808a" stroke="#43808a" stroke-width="0.4" font-weight="400">id</text>
<path d="M634.60 1039.90 L637.60 1039.90 L637.60 1061.80 L634.60 1061.80 L634.60 1043.90 L629.40 1047.60 L628.40 1045.00 Z" fill="#a3a3a3"/>
<text x="626.9" y="1061.8" font-family="'Liberation Sans', sans-serif" font-size="30" fill="#a3a3a3" stroke="#a3a3a3" stroke-width="0.35" font-weight="400" font-style="normal" text-anchor="end" >6</text>
<text x="848.24" y="1064" font-family="'Liberation Mono', monospace" font-size="33" fill="#1f1f1f" stroke="#1f1f1f" stroke-width="0.4" font-weight="400">}</text>
<text x="642.6" y="1105.8" font-family="'Liberation Sans', sans-serif" font-size="30" fill="#a3a3a3" stroke="#a3a3a3" stroke-width="0.35" font-weight="400" font-style="normal" text-anchor="end" >2</text>
<text x="626.9" y="1105.8" font-family="'Liberation Sans', sans-serif" font-size="30" fill="#a3a3a3" stroke="#a3a3a3" stroke-width="0.35" font-weight="400" font-style="normal" text-anchor="end" >6</text>

<text x="642.6" y="1149.8" font-family="'Liberation Sans', sans-serif" font-size="30" fill="#a3a3a3" stroke="#a3a3a3" stroke-width="0.35" font-weight="400" font-style="normal" text-anchor="end" >3</text>
<text x="626.9" y="1149.8" font-family="'Liberation Sans', sans-serif" font-size="30" fill="#a3a3a3" stroke="#a3a3a3" stroke-width="0.35" font-weight="400" font-style="normal" text-anchor="end" >6</text>
<text x="769.12" y="1152" font-family="'Liberation Mono', monospace" font-size="33" fill="#1f1f1f" stroke="#1f1f1f" stroke-width="0.4" font-weight="400">}</text>
<text x="642.6" y="1193.8" font-family="'Liberation Sans', sans-serif" font-size="30" fill="#a3a3a3" stroke="#a3a3a3" stroke-width="0.35" font-weight="400" font-style="normal" text-anchor="end" >4</text>
<text x="626.9" y="1193.8" font-family="'Liberation Sans', sans-serif" font-size="30" fill="#a3a3a3" stroke="#a3a3a3" stroke-width="0.35" font-weight="400" font-style="normal" text-anchor="end" >6</text>

<text x="642.6" y="1237.8" font-family="'Liberation Sans', sans-serif" font-size="30" fill="#a3a3a3" stroke="#a3a3a3" stroke-width="0.35" font-weight="400" font-style="normal" text-anchor="end" >5</text>
<text x="626.9" y="1237.8" font-family="'Liberation Sans', sans-serif" font-size="30" fill="#a3a3a3" stroke="#a3a3a3" stroke-width="0.35" font-weight="400" font-style="normal" text-anchor="end" >6</text>
<text x="690.00" y="1240" font-family="'Liberation Mono', monospace" font-size="33" fill="#1f1f1f" stroke="#1f1f1f" stroke-width="0.4" font-weight="400">}</text>
<text x="642.6" y="1281.8" font-family="'Liberation Sans', sans-serif" font-size="30" fill="#a3a3a3" stroke="#a3a3a3" stroke-width="0.35" font-weight="400" font-style="normal" text-anchor="end" >6</text>
<text x="626.9" y="1281.8" font-family="'Liberation Sans', sans-serif" font-size="30" fill="#a3a3a3" stroke="#a3a3a3" stroke-width="0.35" font-weight="400" font-style="normal" text-anchor="end" >6</text>

<path d="M634.60 200.30 L637.60 200.30 L637.60 222.20 L634.60 222.20 L634.60 204.30 L629.40 208.00 L628.40 205.40 Z" fill="#a3a3a3"/>
<path d="M618.90 200.30 L621.90 200.30 L621.90 222.20 L618.90 222.20 L618.90 204.30 L613.70 208.00 L612.70 205.40 Z" fill="#a3a3a3"/>
<text x="690.00" y="224.4" font-family="'Liberation Mono', monospace" font-size="33" fill="#9c3096" stroke="#9c3096" stroke-width="1.4" font-weight="400">class</text><text x="808.68" y="224.4" font-family="'Liberation Mono', monospace" font-size="33" fill="#1a5582" stroke="#1a5582" stroke-width="0.4" font-weight="400">TodoListViewModel</text><text x="1164.72" y="224.4" font-family="'Liberation Mono', monospace" font-size="33" fill="#1f1f1f" stroke="#1f1f1f" stroke-width="0.4" font-weight="400">{</text>
<rect x="546" y="1832" width="2478" height="2" rx="0" fill="#e0e0e0" />
<path d="M571.5 1851.8 L591.5 1851.8 Q593.5 1851.8 594.7 1853.4 L598 1859.4 Q598.6 1861 598 1862.6 L594.7 1868.6 Q593.5 1870.2 591.5 1870.2 L571.5 1870.2 Q568.8 1870.2 568.8 1867.5 L568.8 1854.5 Q568.8 1851.8 571.5 1851.8 Z" fill="#3478f6"/>
<text x="2775" y="1869" font-family="'Liberation Sans', sans-serif" font-size="23.5" fill="#7f7f7f" stroke="#7f7f7f" stroke-width="0.8" font-weight="400" font-style="normal" text-anchor="start" >Line: 42  Col: 5</text>
<rect x="2954.0" y="1849" width="2" height="23.40000000000009" rx="0" fill="#dedede" />
<rect x="2974.2" y="1849.3" width="23.6" height="23.4" rx="4.5" fill="none" stroke="#6e6e6e" stroke-width="2"/>
<rect x="2977.2" y="1863.6" width="17.6" height="6.4" rx="2.6" fill="#707070" />
<path d="M29.2 172.2 L36.1 180.5 L43.0 172.2" fill="none" stroke="#6e6e6e" stroke-width="2.6" stroke-linecap="round" stroke-linejoin="round"/>
<g transform="translate(54.5,161) scale(1.0103)"><rect x="0" y="0" width="29" height="29" rx="7" fill="#1a7ff5"/><rect x="2.3" y="2.3" width="24.4" height="24.4" rx="5.2" fill="none" stroke="#bcd8fb" stroke-width="1.3"/><g stroke="#fff" stroke-width="2.1" stroke-linecap="round" stroke-linejoin="round" fill="none"><path d="M15.6 8.2 L9.9 17.9"/><path d="M13.4 6.9 L15.5 9.4 L17.6 6.9"/><path d="M13.9 11.9 L20.9 22.1"/><path d="M6.0 17.9 L16.0 17.9"/><path d="M18.8 17.9 L23.0 17.9"/><path d="M7.5 22.1 L8.9 20.3"/></g></g>
<text x="97" y="186" font-family="'Liberation Sans', sans-serif" font-size="27" fill="#3e3e3e" stroke="#3e3e3e" stroke-width="0.35" font-weight="400" font-style="normal" text-anchor="start" >TodoList</text>
<path d="M57.2 216.2 L64.1 224.5 L71.0 216.2" fill="none" stroke="#6e6e6e" stroke-width="2.6" stroke-linecap="round" stroke-linejoin="round"/>
<g transform="translate(83,208.3) scale(1.0000,1.0000)"><path fill="#868b90" d="M0 3.5 Q0 0 3.5 0 L9.5 0 Q11.5 0 13 1.3 L14.5 2.6 L25.5 2.6 Q29 2.6 29 6.2 L29 7.8 L0 7.8 Z"/><path fill="#868b90" d="M0 10 L29 10 L29 20 Q29 23.5 25.5 23.5 L3.5 23.5 Q0 23.5 0 20 Z"/></g>
<text x="125" y="230" font-family="'Liberation Sans', sans-serif" font-size="27" fill="#3e3e3e" stroke="#3e3e3e" stroke-width="0.35" font-weight="400" font-style="normal" text-anchor="start" >TodoList</text>
<g transform="translate(110.6,250.4) scale(1.0286,1.0320)"><path fill="#f06a35" d="M17.3 0.4 C22.8 4.2 26.6 10.8 24.6 17.6 C25.8 19.6 27.1 21.9 27.9 24.4 C26.3 23.0 24.3 22.4 22.1 22.9 C17.6 25.2 10.6 25.9 0.4 16.3 C5.8 19.6 11.6 20.0 16.4 17.6 C11.4 13.4 6.4 8.4 3.4 4.4 C8.0 8.0 12.2 11.4 14.9 13.4 C11.9 10.2 9.2 6.6 7.0 2.6 C11.0 6.2 15.4 10.2 19.6 13.1 C20.6 9.0 19.8 4.2 17.3 0.4 Z"/></g>
<text x="153" y="274" font-family="'Liberation Sans', sans-serif" font-size="27" fill="#3e3e3e" stroke="#3e3e3e" stroke-width="0.35" font-weight="400" font-style="normal" text-anchor="start" >TodoListApp</text>
<path d="M85.2 304.2 L92.1 312.5 L99.0 304.2" fill="none" stroke="#6e6e6e" stroke-width="2.6" stroke-linecap="round" stroke-linejoin="round"/>
<g transform="translate(111,296.3) scale(1.0000,1.0000)"><path fill="#868b90" d="M0 3.5 Q0 0 3.5 0 L9.5 0 Q11.5 0 13 1.3 L14.5 2.6 L25.5 2.6 Q29 2.6 29 6.2 L29 7.8 L0 7.8 Z"/><path fill="#868b90" d="M0 10 L29 10 L29 20 Q29 23.5 25.5 23.5 L3.5 23.5 Q0 23.5 0 20 Z"/></g>
<text x="153" y="318" font-family="'Liberation Sans', sans-serif" font-size="27" fill="#3e3e3e" stroke="#3e3e3e" stroke-width="0.35" font-weight="400" font-style="normal" text-anchor="start" >Helpers</text>
<g transform="translate(138.6,338.4) scale(1.0286,1.0320)"><path fill="#f06a35" d="M17.3 0.4 C22.8 4.2 26.6 10.8 24.6 17.6 C25.8 19.6 27.1 21.9 27.9 24.4 C26.3 23.0 24.3 22.4 22.1 22.9 C17.6 25.2 10.6 25.9 0.4 16.3 C5.8 19.6 11.6 20.0 16.4 17.6 C11.4 13.4 6.4 8.4 3.4 4.4 C8.0 8.0 12.2 11.4 14.9 13.4 C11.9 10.2 9.2 6.6 7.0 2.6 C11.0 6.2 15.4 10.2 19.6 13.1 C20.6 9.0 19.8 4.2 17.3 0.4 Z"/></g>
<text x="181" y="362" font-family="'Liberation Sans', sans-serif" font-size="27" fill="#3e3e3e" stroke="#3e3e3e" stroke-width="0.35" font-weight="400" font-style="normal" text-anchor="start" >Supabase</text>
<path d="M85.2 392.2 L92.1 400.5 L99.0 392.2" fill="none" stroke="#6e6e6e" stroke-width="2.6" stroke-linecap="round" stroke-linejoin="round"/>
<g transform="translate(111,384.3) scale(1.0000,1.0000)"><path fill="#868b90" d="M0 3.5 Q0 0 3.5 0 L9.5 0 Q11.5 0 13 1.3 L14.5 2.6 L25.5 2.6 Q29 2.6 29 6.2 L29 7.8 L0 7.8 Z"/><path fill="#868b90" d="M0 10 L29 10 L29 20 Q29 23.5 25.5 23.5 L3.5 23.5 Q0 23.5 0 20 Z"/></g>
<text x="153" y="406" font-family="'Liberation Sans', sans-serif" font-size="27" fill="#3e3e3e" stroke="#3e3e3e" stroke-width="0.35" font-weight="400" font-style="normal" text-anchor="start" >Model</text>
<g transform="translate(138.6,426.4) scale(1.0286,1.0320)"><path fill="#f06a35" d="M17.3 0.4 C22.8 4.2 26.6 10.8 24.6 17.6 C25.8 19.6 27.1 21.9 27.9 24.4 C26.3 23.0 24.3 22.4 22.1 22.9 C17.6 25.2 10.6 25.9 0.4 16.3 C5.8 19.6 11.6 20.0 16.4 17.6 C11.4 13.4 6.4 8.4 3.4 4.4 C8.0 8.0 12.2 11.4 14.9 13.4 C11.9 10.2 9.2 6.6 7.0 2.6 C11.0 6.2 15.4 10.2 19.6 13.1 C20.6 9.0 19.8 4.2 17.3 0.4 Z"/></g>
<text x="181" y="450" font-family="'Liberation Sans', sans-serif" font-size="27" fill="#3e3e3e" stroke="#3e3e3e" stroke-width="0.35" font-weight="400" font-style="normal" text-anchor="start" >TodoItem</text>
<path d="M85.2 480.2 L92.1 488.5 L99.0 480.2" fill="none" stroke="#6e6e6e" stroke-width="2.6" stroke-linecap="round" stroke-linejoin="round"/>
<g transform="translate(111,472.3) scale(1.0000,1.0000)"><path fill="#868b90" d="M0 3.5 Q0 0 3.5 0 L9.5 0 Q11.5 0 13 1.3 L14.5 2.6 L25.5 2.6 Q29 2.6 29 6.2 L29 7.8 L0 7.8 Z"/><path fill="#868b90" d="M0 10 L29 10 L29 20 Q29 23.5 25.5 23.5 L3.5 23.5 Q0 23.5 0 20 Z"/></g>
<text x="153" y="494" font-family="'Liberation Sans', sans-serif" font-size="27" fill="#3e3e3e" stroke="#3e3e3e" stroke-width="0.35" font-weight="400" font-style="normal" text-anchor="start" >Views</text>
<g transform="translate(138.6,514.4) scale(1.0286,1.0320)"><path fill="#f06a35" d="M17.3 0.4 C22.8 4.2 26.6 10.8 24.6 17.6 C25.8 19.6 27.1 21.9 27.9 24.4 C26.3 23.0 24.3 22.4 22.1 22.9 C17.6 25.2 10.6 25.9 0.4 16.3 C5.8 19.6 11.6 20.0 16.4 17.6 C11.4 13.4 6.4 8.4 3.4 4.4 C8.0 8.0 12.2 11.4 14.9 13.4 C11.9 10.2 9.2 6.6 7.0 2.6 C11.0 6.2 15.4 10.2 19.6 13.1 C20.6 9.0 19.8 4.2 17.3 0.4 Z"/></g>
<text x="181" y="538" font-family="'Liberation Sans', sans-serif" font-size="27" fill="#3e3e3e" stroke="#3e3e3e" stroke-width="0.35" font-weight="400" font-style="normal" text-anchor="start" >LandingView</text>
<g transform="translate(138.6,558.4) scale(1.0286,1.0320)"><path fill="#f06a35" d="M17.3 0.4 C22.8 4.2 26.6 10.8 24.6 17.6 C25.8 19.6 27.1 21.9 27.9 24.4 C26.3 23.0 24.3 22.4 22.1 22.9 C17.6 25.2 10.6 25.9 0.4 16.3 C5.8 19.6 11.6 20.0 16.4 17.6 C11.4 13.4 6.4 8.4 3.4 4.4 C8.0 8.0 12.2 11.4 14.9 13.4 C11.9 10.2 9.2 6.6 7.0 2.6 C11.0 6.2 15.4 10.2 19.6 13.1 C20.6 9.0 19.8 4.2 17.3 0.4 Z"/></g>
<text x="181" y="582" font-family="'Liberation Sans', sans-serif" font-size="27" fill="#3e3e3e" stroke="#3e3e3e" stroke-width="0.35" font-weight="400" font-style="normal" text-anchor="start" >ItemView</text>
<path d="M85.2 612.2 L92.1 620.5 L99.0 612.2" fill="none" stroke="#6e6e6e" stroke-width="2.6" stroke-linecap="round" stroke-linejoin="round"/>
<g transform="translate(111,604.3) scale(1.0000,1.0000)"><path fill="#868b90" d="M0 3.5 Q0 0 3.5 0 L9.5 0 Q11.5 0 13 1.3 L14.5 2.6 L25.5 2.6 Q29 2.6 29 6.2 L29 7.8 L0 7.8 Z"/><path fill="#868b90" d="M0 10 L29 10 L29 20 Q29 23.5 25.5 23.5 L3.5 23.5 Q0 23.5 0 20 Z"/></g>
<text x="153" y="626" font-family="'Liberation Sans', sans-serif" font-size="27" fill="#3e3e3e" stroke="#3e3e3e" stroke-width="0.35" font-weight="400" font-style="normal" text-anchor="start" >ViewModel</text>
<rect x="20.3" y="638" width="503.4" height="43.7" rx="10" fill="#2b62d9" />
<g transform="translate(138.6,646.4) scale(1.0286,1.0320)"><path fill="#ffffff" d="M17.3 0.4 C22.8 4.2 26.6 10.8 24.6 17.6 C25.8 19.6 27.1 21.9 27.9 24.4 C26.3 23.0 24.3 22.4 22.1 22.9 C17.6 25.2 10.6 25.9 0.4 16.3 C5.8 19.6 11.6 20.0 16.4 17.6 C11.4 13.4 6.4 8.4 3.4 4.4 C8.0 8.0 12.2 11.4 14.9 13.4 C11.9 10.2 9.2 6.6 7.0 2.6 C11.0 6.2 15.4 10.2 19.6 13.1 C20.6 9.0 19.8 4.2 17.3 0.4 Z"/></g>
<text x="181" y="670" font-family="'Liberation Sans', sans-serif" font-size="27" fill="#ffffff" stroke="#ffffff" stroke-width="0.35" font-weight="400" font-style="normal" text-anchor="start" >TodoListViewModel</text>
<g transform="translate(0,0)"><path d="M117.2 712.4 L114.9 712.4 Q112.6 712.4 112.1 710.1 L109.9 698.2 Q109.4 695.4 112.2 694.8 L131.4 691.4 Q134.1 691 134.7 693.7 L135.4 697.6" fill="none" stroke="#1badf8" stroke-width="2.3" stroke-linejoin="round"/><rect x="118.1" y="698.1" width="22.8" height="17.8" rx="3" fill="#f5f5f5" stroke="#1badf8" stroke-width="2.3"/><path d="M117 713.6 L122.4 709.2 Q123.2 708.6 124 709.3 L126.4 711.2 L132.4 706.6 Q133.3 705.9 134.2 706.6 L142 712.8 L142 714 Q142 717 139 717 L120 717 Q117 717 117 714 Z" fill="#1badf8"/><circle cx="125.9" cy="703.8" r="2.8" fill="#1badf8"/></g>
<text x="153" y="714" font-family="'Liberation Sans', sans-serif" font-size="27" fill="#3e3e3e" stroke="#3e3e3e" stroke-width="0.35" font-weight="400" font-style="normal" text-anchor="start" >Assets</text>
<path d="M90.2 741.6 L98.3 748.0 L90.2 754.4" fill="none" stroke="#6e6e6e" stroke-width="2.6" stroke-linecap="round" stroke-linejoin="round"/>
<g transform="translate(111,736.3) scale(1.0000,1.0000)"><path fill="#868b90" d="M0 3.5 Q0 0 3.5 0 L9.5 0 Q11.5 0 13 1.3 L14.5 2.6 L25.5 2.6 Q29 2.6 29 6.2 L29 7.8 L0 7.8 Z"/><path fill="#868b90" d="M0 10 L29 10 L29 20 Q29 23.5 25.5 23.5 L3.5 23.5 Q0 23.5 0 20 Z"/></g>
<text x="153" y="758" font-family="'Liberation Sans', sans-serif" font-size="27" fill="#3e3e3e" stroke="#3e3e3e" stroke-width="0.35" font-weight="400" font-style="normal" text-anchor="start" >Preview Content</text>
<text x="29.3" y="824.7" font-family="'Liberation Sans', sans-serif" font-size="26.2" fill="#b3b3b3" font-weight="700" font-style="normal" text-anchor="start" >Package Dependencies</text>
<path d="M33.900000000000006 848.7 L42.0 855.3 L33.900000000000006 861.9" fill="none" stroke="#6e6e6e" stroke-width="2.6" stroke-linecap="round" stroke-linejoin="round"/>
<g transform="translate(57,841.8) scale(1.0000,1.0000)" fill="#a97a3b"><path d="M0.4 8.2 L11.7 14.3 L11.7 27.8 L1.6 22.2 Q0.4 21.5 0.4 20.1 Z"/><path d="M25.6 8.2 L14.3 14.3 L14.3 27.8 L24.4 22.2 Q25.6 21.5 25.6 20.1 Z"/><path d="M1.5 6.6 L6.4 3.9 L17.7 10.2 L13 12.7 Z"/><path d="M8.6 2.5 L12.0 0.7 Q13 0.2 14 0.7 L24.5 6.6 L19.8 9.1 Z"/></g>
<text x="96.2" y="865.3" font-family="'Liberation Sans', sans-serif" font-size="27" fill="#3e3e3e" stroke="#3e3e3e" stroke-width="0.35" font-weight="400" font-style="normal" text-anchor="start" textLength="194.5" lengthAdjust="spacing">KeychainAccess</text>
<text x="299.6" y="865.3" font-family="'Liberation Sans', sans-serif" font-size="27" fill="#7d7d7d" stroke="#7d7d7d" stroke-width="0.35" font-weight="400" font-style="normal" text-anchor="start" >4.2.2</text>
<path d="M33.900000000000006 892.8000000000001 L42.0 899.4 L33.900000000000006 906.0" fill="none" stroke="#6e6e6e" stroke-width="2.6" stroke-linecap="round" stroke-linejoin="round"/>
<g transform="translate(57,885.9) scale(1.0000,1.0000)" fill="#a97a3b"><path d="M0.4 8.2 L11.7 14.3 L11.7 27.8 L1.6 22.2 Q0.4 21.5 0.4 20.1 Z"/><path d="M25.6 8.2 L14.3 14.3 L14.3 27.8 L24.4 22.2 Q25.6 21.5 25.6 20.1 Z"/><path d="M1.5 6.6 L6.4 3.9 L17.7 10.2 L13 12.7 Z"/><path d="M8.6 2.5 L12.0 0.7 Q13 0.2 14 0.7 L24.5 6.6 L19.8 9.1 Z"/></g>
<text x="96.2" y="909.4" font-family="'Liberation Sans', sans-serif" font-size="27" fill="#3e3e3e" stroke="#3e3e3e" stroke-width="0.35" font-weight="400" font-style="normal" text-anchor="start" textLength="118.5" lengthAdjust="spacing">Supabase</text>
<text x="224.4" y="909.4" font-family="'Liberation Sans', sans-serif" font-size="27" fill="#7d7d7d" stroke="#7d7d7d" stroke-width="0.35" font-weight="400" font-style="normal" text-anchor="start" textLength="66" lengthAdjust="spacing">2.10.1</text>
<path d="M33.900000000000006 936.9000000000001 L42.0 943.5 L33.900000000000006 950.1" fill="none" stroke="#6e6e6e" stroke-width="2.6" stroke-linecap="round" stroke-linejoin="round"/>
<g transform="translate(57,930.0) scale(1.0000,1.0000)" fill="#a97a3b"><path d="M0.4 8.2 L11.7 14.3 L11.7 27.8 L1.6 22.2 Q0.4 21.5 0.4 20.1 Z"/><path d="M25.6 8.2 L14.3 14.3 L14.3 27.8 L24.4 22.2 Q25.6 21.5 25.6 20.1 Z"/><path d="M1.5 6.6 L6.4 3.9 L17.7 10.2 L13 12.7 Z"/><path d="M8.6 2.5 L12.0 0.7 Q13 0.2 14 0.7 L24.5 6.6 L19.8 9.1 Z"/></g>
<text x="96.2" y="953.5" font-family="'Liberation Sans', sans-serif" font-size="27" fill="#3e3e3e" stroke="#3e3e3e" stroke-width="0.35" font-weight="400" font-style="normal" text-anchor="start" textLength="306.5" lengthAdjust="spacing">swift-concurrency-extras</text>
<text x="410.4" y="953.5" font-family="'Liberation Sans', sans-serif" font-size="27" fill="#7d7d7d" stroke="#7d7d7d" stroke-width="0.35" font-weight="400" font-style="normal" text-anchor="start" textLength="52.5" lengthAdjust="spacing">1.1.0</text>
<path d="M33.900000000000006 981.0 L42.0 987.5999999999999 L33.900000000000006 994.1999999999999" fill="none" stroke="#6e6e6e" stroke-width="2.6" stroke-linecap="round" stroke-linejoin="round"/>
<g transform="translate(57,974.0999999999999) scale(1.0000,1.0000)" fill="#a97a3b"><path d="M0.4 8.2 L11.7 14.3 L11.7 27.8 L1.6 22.2 Q0.4 21.5 0.4 20.1 Z"/><path d="M25.6 8.2 L14.3 14.3 L14.3 27.8 L24.4 22.2 Q25.6 21.5 25.6 20.1 Z"/><path d="M1.5 6.6 L6.4 3.9 L17.7 10.2 L13 12.7 Z"/><path d="M8.6 2.5 L12.0 0.7 Q13 0.2 14 0.7 L24.5 6.6 L19.8 9.1 Z"/></g>
<text x="96.2" y="997.5999999999999" font-family="'Liberation Sans', sans-serif" font-size="27" fill="#3e3e3e" stroke="#3e3e3e" stroke-width="0.35" font-weight="400" font-style="normal" text-anchor="start" textLength="147.2" lengthAdjust="spacing">swift-crypto</text>
<text x="252.2" y="997.5999999999999" font-family="'Liberation Sans', sans-serif" font-size="27" fill="#7d7d7d" stroke="#7d7d7d" stroke-width="0.35" font-weight="400" font-style="normal" text-anchor="start" textLength="57.5" lengthAdjust="spacing">3.4.0</text>
<path d="M34.4 1850.5 L34.4 1870.4" fill="none" stroke="#444444" stroke-width="2.6" stroke-linecap="round" stroke-linejoin="round" />
<path d="M24.6 1860.4 L44.2 1860.4" fill="none" stroke="#444444" stroke-width="2.6" stroke-linecap="round" stroke-linejoin="round" />
<rect x="56.5" y="1838.3" width="477.5" height="43.4" rx="14" fill="#e5e5e5" stroke="#d0d0d0" stroke-width="1"/>
<rect x="66.2" y="1848.3" width="50" height="24.4" rx="12.2" fill="none" stroke="#6c6c6c" stroke-width="1.9"/>
<rect x="74.6" y="1854.6000000000001" width="11.200000000000003" height="1.6" rx="0" fill="#6c6c6c" />
<rect x="76.6" y="1858.8" width="7.200000000000003" height="1.6" rx="0" fill="#6c6c6c" />
<rect x="78.4" y="1863.0" width="3.5999999999999943" height="1.6" rx="0" fill="#6c6c6c" />
<path d="M97 1857.6 L101.7 1862.6 L106.4 1857.6" fill="none" stroke="#6c6c6c" stroke-width="2.2" stroke-linecap="round" stroke-linejoin="round" />
<text x="124.9" y="1867.4" font-family="'Liberation Sans', sans-serif" font-size="23.5" fill="#a9a9a9" stroke="#a9a9a9" stroke-width="0.35" font-weight="400" font-style="normal" text-anchor="start" >Filter</text>
<circle cx="475.1" cy="1860" r="12" fill="none" stroke="#6c6c6c" stroke-width="1.9"/>
<path d="M475.1 1852.4 L475.1 1860.4 L469 1860.4" fill="none" stroke="#6c6c6c" stroke-width="1.9" stroke-linecap="round" stroke-linejoin="round" />
<rect x="496.9" y="1848.2" width="24.4" height="24.4" rx="1.5" fill="none" stroke="#6c6c6c" stroke-width="1.9"/>
<path d="M502 1860.3 L508.6 1860.3 M505.3 1857 L505.3 1863.6 M511.2 1860.3 L516.4 1860.3" fill="none" stroke="#6c6c6c" stroke-width="1.8" stroke-linecap="round" stroke-linejoin="round" />
</svg></body></html>
